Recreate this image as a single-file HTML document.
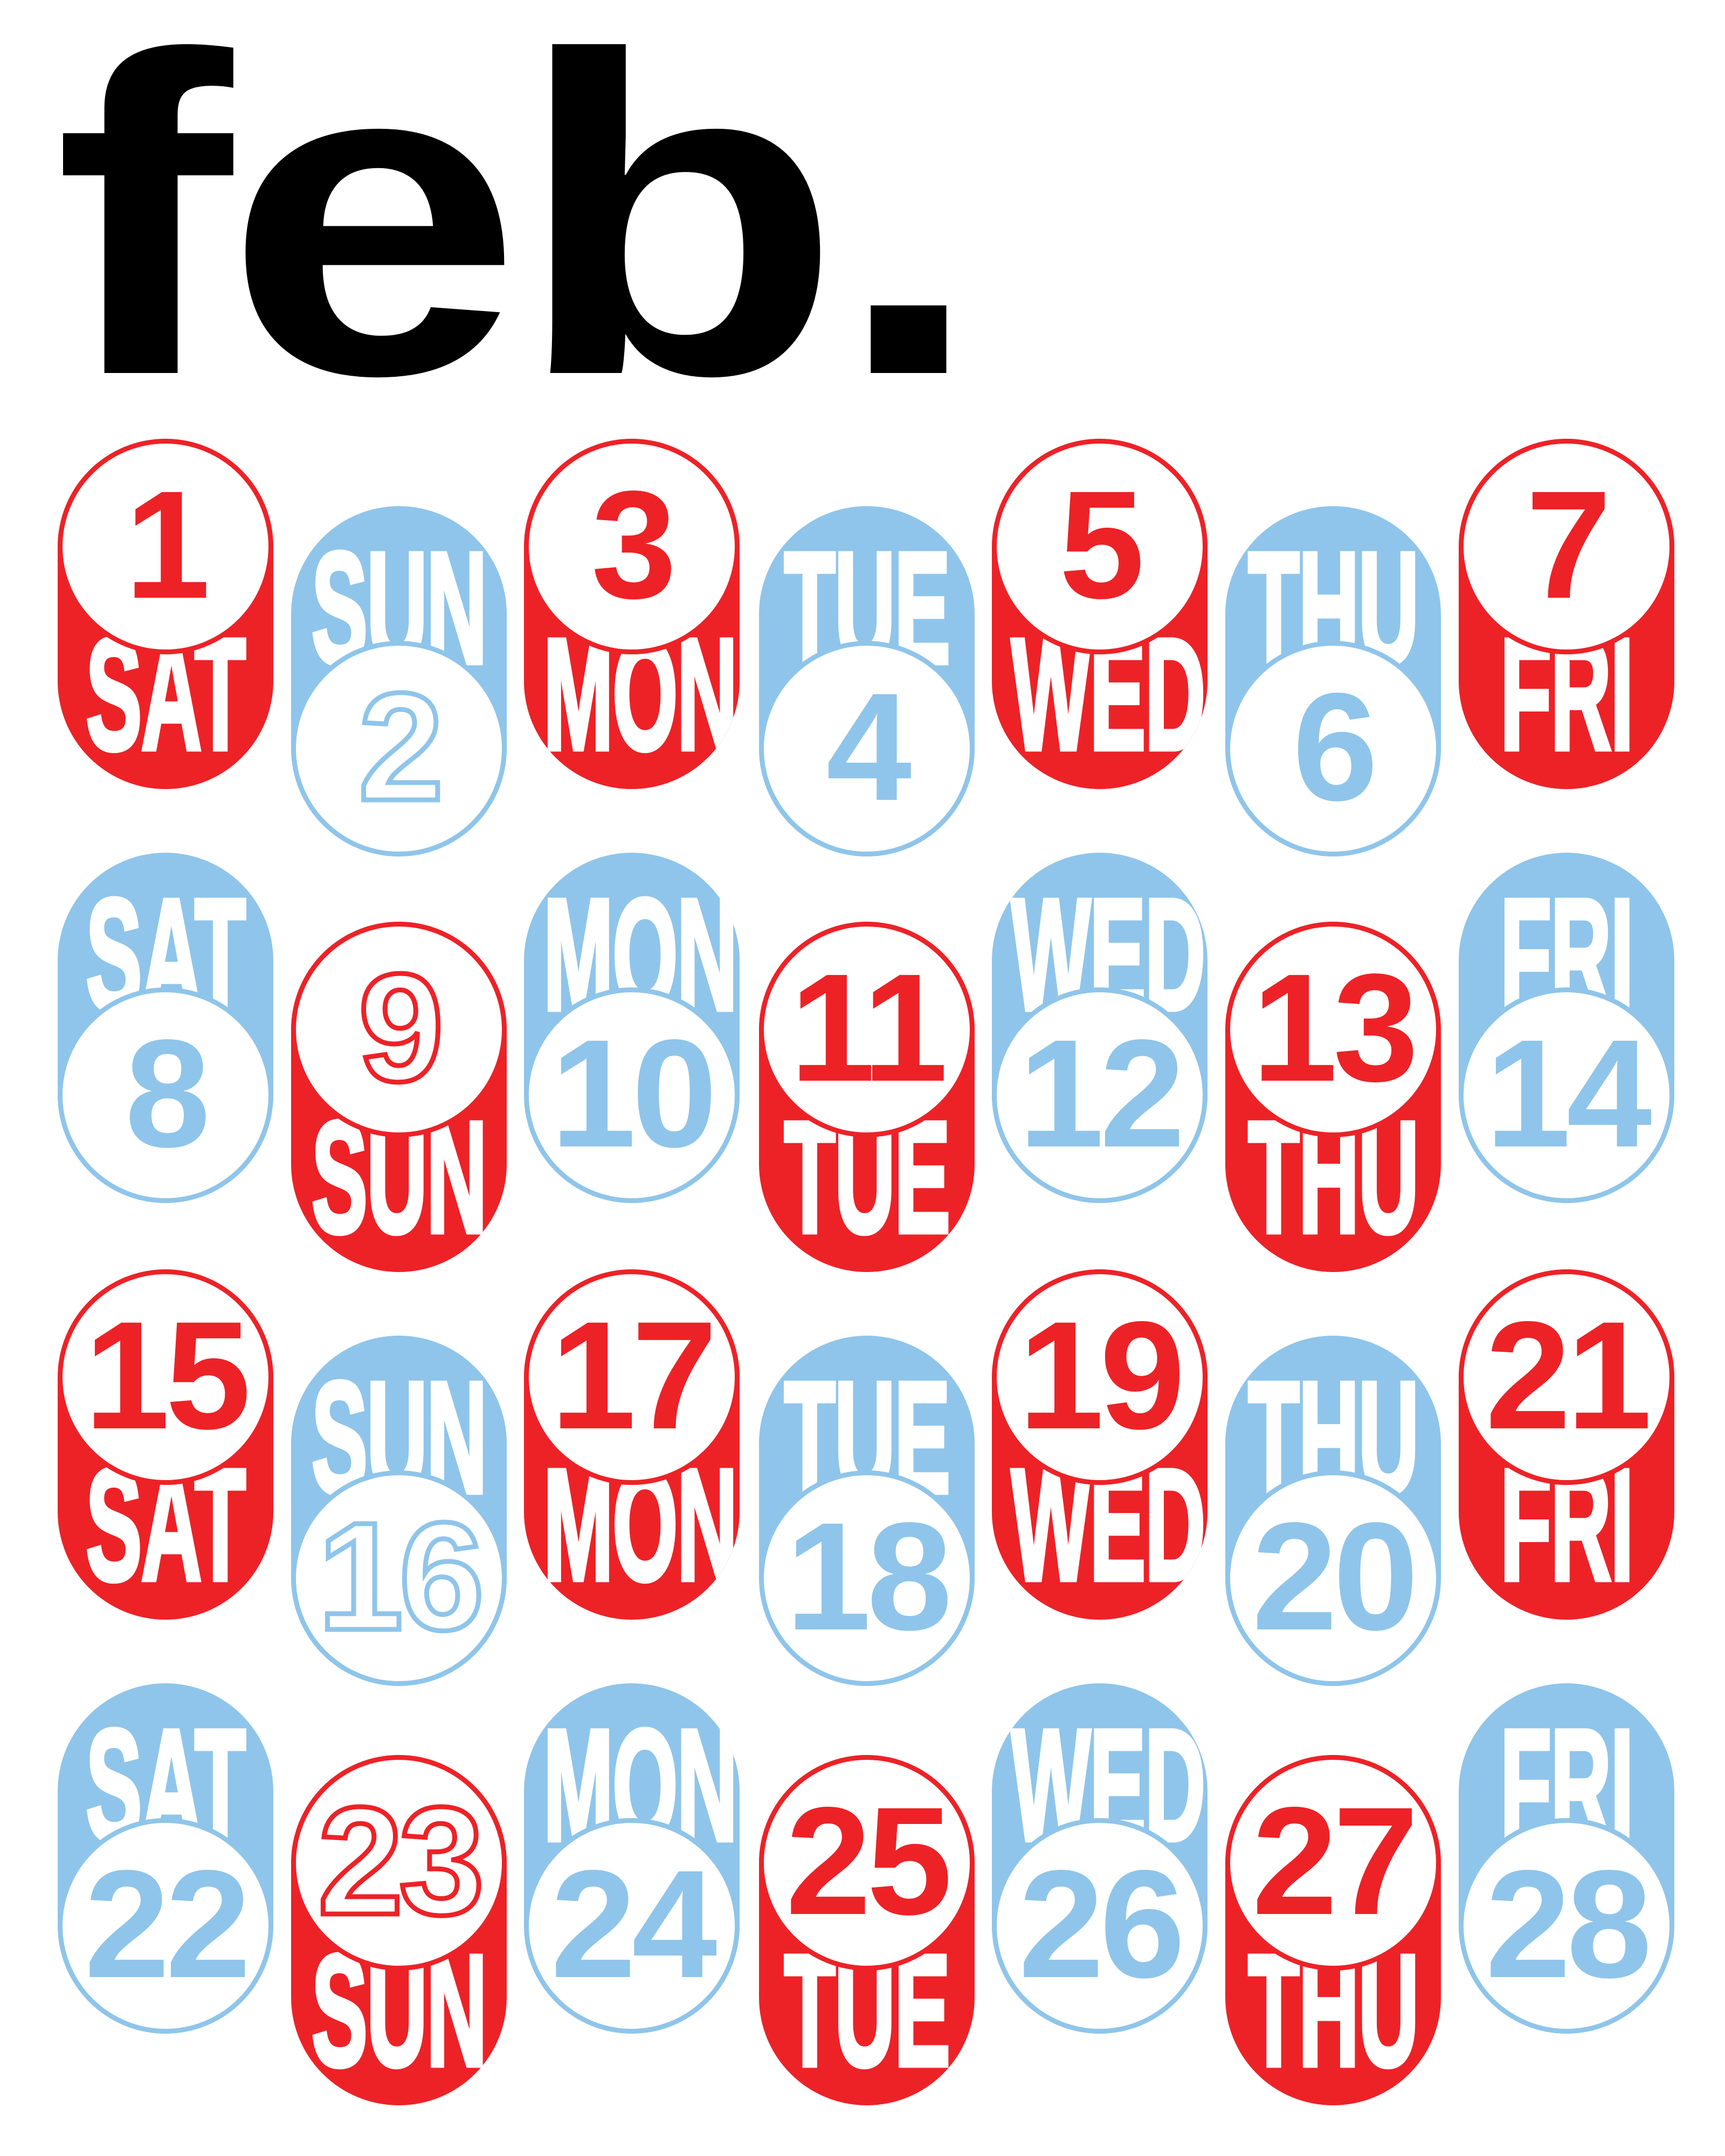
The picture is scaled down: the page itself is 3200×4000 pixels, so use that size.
<!DOCTYPE html>
<html><head><meta charset="utf-8"><style>
html,body{margin:0;padding:0;background:#fff}
body{width:3200px;height:4000px;position:relative;overflow:hidden;font-family:"Liberation Sans",sans-serif}
.t{position:absolute;left:100px;top:-20px;font-weight:700;font-size:842px;line-height:1;letter-spacing:-12px;color:#000;transform:scaleX(1.18);transform-origin:0 0}
.p{position:absolute;width:400px;height:650px;border-radius:200px;overflow:hidden}
.r{background:#ed2227}.b{background:#8fc5ea}
.c{position:absolute;left:0;width:400px;height:400px;border-radius:50%;background:#fff;box-sizing:border-box;border:9px solid;display:flex;align-items:center;justify-content:center;font-weight:700;font-size:285px;letter-spacing:-8px;line-height:1;z-index:2}
.r .c{top:0;border-color:#ed2227;color:#ed2227}
.b .c{top:250px;border-color:#8fc5ea;color:#8fc5ea}
.c span{display:block;margin-top:-6px}
.d{position:absolute;left:0;width:100%;height:190px;text-align:center;color:#fff;-webkit-text-stroke:6px #fff;font-weight:700;font-size:190px;line-height:190px;letter-spacing:-2px;z-index:1;transform:scale(0.82,1.55);transform-origin:50% 50%;white-space:nowrap}
.r .d{top:380px}.b .d{top:95px}
.r .o{color:#fff;-webkit-text-stroke:9px #ed2227}
.b .o{color:#fff;-webkit-text-stroke:9px #8fc5ea}
</style></head><body>
<div class="t">feb.</div>

<div class="p r" style="left:107px;top:814px"><div class="c"><span>1</span></div><div class="d">SAT</div></div>
<div class="p b" style="left:540px;top:939px"><div class="c"><span class="o">2</span></div><div class="d">SUN</div></div>
<div class="p r" style="left:972px;top:814px"><div class="c"><span>3</span></div><div class="d">MON</div></div>
<div class="p b" style="left:1408px;top:939px"><div class="c"><span>4</span></div><div class="d">TUE</div></div>
<div class="p r" style="left:1840px;top:814px"><div class="c"><span>5</span></div><div class="d">WED</div></div>
<div class="p b" style="left:2273px;top:939px"><div class="c"><span>6</span></div><div class="d">THU</div></div>
<div class="p r" style="left:2706px;top:814px"><div class="c"><span>7</span></div><div class="d">FRI</div></div>

<div class="p b" style="left:107px;top:1582px"><div class="c"><span>8</span></div><div class="d">SAT</div></div>
<div class="p r" style="left:540px;top:1710px"><div class="c"><span class="o">9</span></div><div class="d">SUN</div></div>
<div class="p b" style="left:972px;top:1582px"><div class="c"><span>10</span></div><div class="d">MON</div></div>
<div class="p r" style="left:1408px;top:1710px"><div class="c"><span>11</span></div><div class="d">TUE</div></div>
<div class="p b" style="left:1840px;top:1582px"><div class="c"><span>12</span></div><div class="d">WED</div></div>
<div class="p r" style="left:2273px;top:1710px"><div class="c"><span>13</span></div><div class="d">THU</div></div>
<div class="p b" style="left:2706px;top:1582px"><div class="c"><span>14</span></div><div class="d">FRI</div></div>

<div class="p r" style="left:107px;top:2355px"><div class="c"><span>15</span></div><div class="d">SAT</div></div>
<div class="p b" style="left:540px;top:2478px"><div class="c"><span class="o">16</span></div><div class="d">SUN</div></div>
<div class="p r" style="left:972px;top:2355px"><div class="c"><span>17</span></div><div class="d">MON</div></div>
<div class="p b" style="left:1408px;top:2478px"><div class="c"><span>18</span></div><div class="d">TUE</div></div>
<div class="p r" style="left:1840px;top:2355px"><div class="c"><span>19</span></div><div class="d">WED</div></div>
<div class="p b" style="left:2273px;top:2478px"><div class="c"><span>20</span></div><div class="d">THU</div></div>
<div class="p r" style="left:2706px;top:2355px"><div class="c"><span>21</span></div><div class="d">FRI</div></div>

<div class="p b" style="left:107px;top:3123px"><div class="c"><span>22</span></div><div class="d">SAT</div></div>
<div class="p r" style="left:540px;top:3256px"><div class="c"><span class="o">23</span></div><div class="d">SUN</div></div>
<div class="p b" style="left:972px;top:3123px"><div class="c"><span>24</span></div><div class="d">MON</div></div>
<div class="p r" style="left:1408px;top:3256px"><div class="c"><span>25</span></div><div class="d">TUE</div></div>
<div class="p b" style="left:1840px;top:3123px"><div class="c"><span>26</span></div><div class="d">WED</div></div>
<div class="p r" style="left:2273px;top:3256px"><div class="c"><span>27</span></div><div class="d">THU</div></div>
<div class="p b" style="left:2706px;top:3123px"><div class="c"><span>28</span></div><div class="d">FRI</div></div>
</body></html>
